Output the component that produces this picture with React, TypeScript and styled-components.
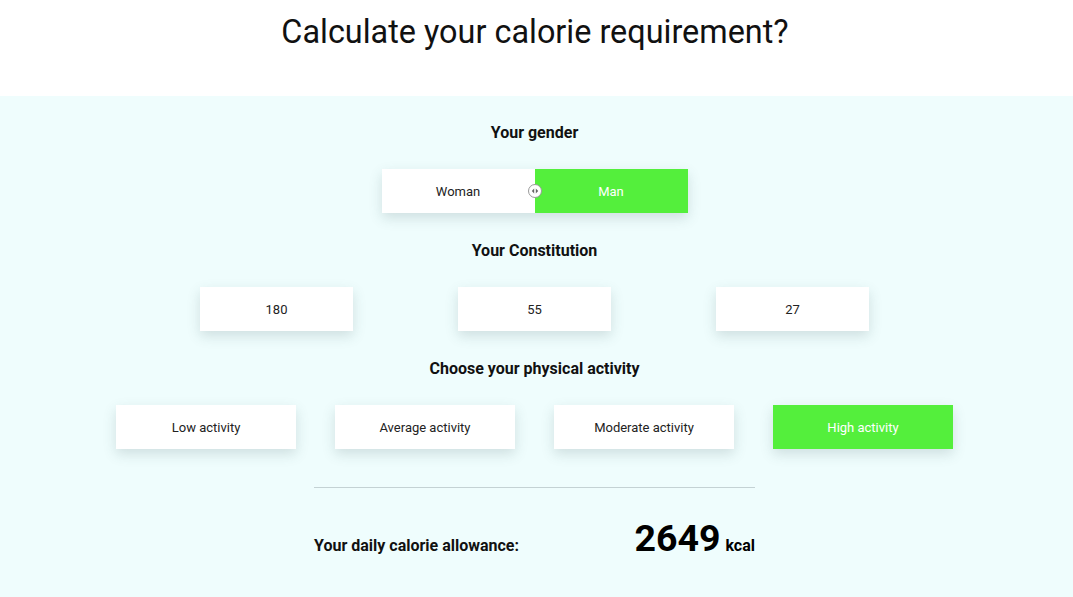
import React, { useState } from "react";
import styled, { createGlobalStyle } from "styled-components";

const Global = createGlobalStyle`
  html, body { margin: 0; padding: 0; background: #ffffff; }
  body { font-family: Roboto, "Liberation Sans", Arial, sans-serif; color: #000; }
  * { box-sizing: border-box; }
`;

const Header = styled.header`
  height: 96px;
  display: flex;
  justify-content: center;
  padding: 11px 3px 0 0;
`;

const Title = styled.h1`
  margin: 0;
  font-size: 32.4px;
  font-weight: 400;
  line-height: 42px;
  color: #111;
`;

const Section = styled.section`
  background: #effdfd;
  min-height: 501px;
  padding: 27px 4px 0 0;
  display: flex;
  flex-direction: column;
  align-items: center;
`;

const Label = styled.h2`
  margin: 0;
  font-size: 16px;
  font-weight: 700;
  line-height: 20px;
  color: #111;
`;

const Row = styled.div<{ $gap: number }>`
  display: flex;
  gap: ${(p) => p.$gap}px;
  margin: 26px 0 28px;
`;

const Toggle = styled.div`
  position: relative;
  display: flex;
  box-shadow: 0 5px 12px rgba(60, 90, 95, 0.18);
  margin: 26px 0 28px;
`;

const Option = styled.button<{ $active: boolean; $w: number }>`
  width: ${(p) => p.$w}px;
  height: 44px;
  border: none;
  padding: 0;
  font-family: Roboto, "Liberation Sans", Arial, sans-serif;
  font-size: 13px;
  color: ${(p) => (p.$active ? "#ffffff" : "#222")};
  background: ${(p) => (p.$active ? "#54ef3c" : "#ffffff")};
  cursor: pointer;
`;

const Card = styled(Option)`
  box-shadow: 0 5px 12px rgba(60, 90, 95, 0.18);
`;

const Handle = styled.span`
  position: absolute;
  left: 146px;
  top: 15px;
  width: 14px;
  height: 14px;
  border-radius: 50%;
  background: #fff;
  border: 1px solid #9a9a9a;
  display: flex;
  align-items: center;
  justify-content: center;
`;

const Divider = styled.hr`
  width: 441px;
  border: none;
  border-top: 1px solid #c4d2d4;
  margin: 10px 0 0;
`;

const Result = styled.div`
  width: 441px;
  display: flex;
  justify-content: space-between;
  align-items: baseline;
  margin-top: 27px;
`;

const ResultLabel = styled.span`
  font-size: 16px;
  font-weight: 700;
  color: #111;
`;

const Value = styled.span`
  display: flex;
  align-items: baseline;
  gap: 5px;
`;

const Number = styled.span`
  font-size: 37.5px;
  font-weight: 700;
  line-height: 46px;
`;

const Unit = styled.span`
  font-size: 16px;
  font-weight: 700;
`;

export default function App() {
  const [gender, setGender] = useState("Man");
  const [activity, setActivity] = useState("High activity");
  const activities = ["Low activity", "Average activity", "Moderate activity", "High activity"];
  return (
    <>
      <Global />
      <Header>
        <Title>Calculate your calorie requirement?</Title>
      </Header>
      <Section>
        <Label>Your gender</Label>
        <Toggle>
          {["Woman", "Man"].map((g) => (
            <Option key={g} $w={153} $active={gender === g} onClick={() => setGender(g)}>
              {g}
            </Option>
          ))}
          <Handle>
            <svg width="8" height="8" viewBox="0 0 8 8">
              <path d="M3.2 1.5 L0.8 4 L3.2 6.5 Z" fill="#666" />
              <path d="M4.8 1.5 L7.2 4 L4.8 6.5 Z" fill="#666" />
            </svg>
          </Handle>
        </Toggle>
        <Label>Your Constitution</Label>
        <Row $gap={105}>
          {["180", "55", "27"].map((v) => (
            <Card key={v} $w={153} $active={false}>
              {v}
            </Card>
          ))}
        </Row>
        <Label>Choose your physical activity</Label>
        <Row $gap={39}>
          {activities.map((a) => (
            <Card key={a} $w={180} $active={activity === a} onClick={() => setActivity(a)}>
              {a}
            </Card>
          ))}
        </Row>
        <Divider />
        <Result>
          <ResultLabel>Your daily calorie allowance:</ResultLabel>
          <Value>
            <Number>2649</Number>
            <Unit>kcal</Unit>
          </Value>
        </Result>
      </Section>
    </>
  );
}
